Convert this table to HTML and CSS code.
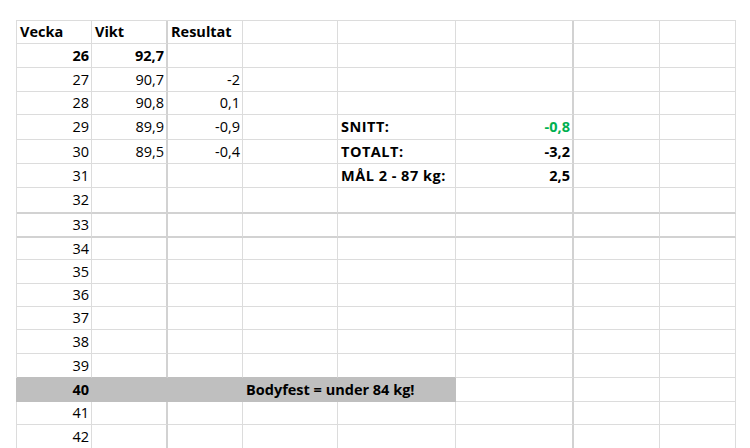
FILE: index.html
```html
<!DOCTYPE html>
<html lang="sv">
<head>
<meta charset="utf-8">
<title>Vikt</title>
<link rel="stylesheet" href="styles.css">
</head>
<body>
<div class="sheet">
  <!-- header -->
  <div class="c b">Vecka</div><div class="c b cb">Vikt</div><div class="c b">Resultat</div><div class="c"></div><div class="c"></div><div class="c cf"></div><div class="c"></div><div class="c"></div>
  <!-- 26 -->
  <div class="c n b">26</div><div class="c n b cb">92,7</div><div class="c"></div><div class="c"></div><div class="c"></div><div class="c cf"></div><div class="c"></div><div class="c"></div>
  <!-- 27 -->
  <div class="c n">27</div><div class="c n cb">90,7</div><div class="c n">-2</div><div class="c"></div><div class="c"></div><div class="c cf"></div><div class="c"></div><div class="c"></div>
  <!-- 28 -->
  <div class="c n">28</div><div class="c n cb">90,8</div><div class="c n">0,1</div><div class="c"></div><div class="c"></div><div class="c cf"></div><div class="c"></div><div class="c"></div>
  <!-- 29 -->
  <div class="c n">29</div><div class="c n cb">89,9</div><div class="c n">-0,9</div><div class="c"></div><div class="c b lbl">SNITT:</div><div class="c n b cf green">-0,8</div><div class="c"></div><div class="c"></div>
  <!-- 30 -->
  <div class="c n">30</div><div class="c n cb">89,5</div><div class="c n">-0,4</div><div class="c"></div><div class="c b lbl">TOTALT:</div><div class="c n b cf">-3,2</div><div class="c"></div><div class="c"></div>
  <!-- 31 -->
  <div class="c n">31</div><div class="c cb"></div><div class="c"></div><div class="c"></div><div class="c b lbl">MÅL 2 - 87 kg:</div><div class="c n b cf">2,5</div><div class="c"></div><div class="c"></div>
  <!-- 32 -->
  <div class="c n rt">32</div><div class="c cb rt"></div><div class="c rt"></div><div class="c rt"></div><div class="c rt"></div><div class="c cf rt"></div><div class="c rt"></div><div class="c rt"></div>
  <!-- 33 -->
  <div class="c n rt">33</div><div class="c cb rt"></div><div class="c rt"></div><div class="c rt"></div><div class="c rt"></div><div class="c cf rt"></div><div class="c rt"></div><div class="c rt"></div>
  <!-- 34 -->
  <div class="c n">34</div><div class="c cb"></div><div class="c"></div><div class="c"></div><div class="c"></div><div class="c cf"></div><div class="c"></div><div class="c"></div>
  <!-- 35 -->
  <div class="c n">35</div><div class="c cb"></div><div class="c"></div><div class="c"></div><div class="c"></div><div class="c cf"></div><div class="c"></div><div class="c"></div>
  <!-- 36 -->
  <div class="c n">36</div><div class="c cb"></div><div class="c"></div><div class="c"></div><div class="c"></div><div class="c cf"></div><div class="c"></div><div class="c"></div>
  <!-- 37 -->
  <div class="c n">37</div><div class="c cb"></div><div class="c"></div><div class="c"></div><div class="c"></div><div class="c cf"></div><div class="c"></div><div class="c"></div>
  <!-- 38 -->
  <div class="c n">38</div><div class="c cb"></div><div class="c"></div><div class="c"></div><div class="c"></div><div class="c cf"></div><div class="c"></div><div class="c"></div>
  <!-- 39 -->
  <div class="c n above">39</div><div class="c cb above"></div><div class="c above"></div><div class="c above"></div><div class="c above"></div><div class="c cf"></div><div class="c"></div><div class="c"></div>
  <!-- 40 -->
  <div class="c n b bar bar-first">40</div><div class="c bar"></div><div class="c bar"></div><div class="c b bar bar-note">Bodyfest = under 84 kg!</div><div class="c cf"></div><div class="c"></div><div class="c"></div>
  <!-- 41 -->
  <div class="c n">41</div><div class="c cb"></div><div class="c"></div><div class="c"></div><div class="c"></div><div class="c cf"></div><div class="c"></div><div class="c"></div>
  <!-- 42 -->
  <div class="c n">42</div><div class="c cb"></div><div class="c"></div><div class="c"></div><div class="c"></div><div class="c cf"></div><div class="c"></div><div class="c"></div>
</div>
</body>
</html>
```

FILE: styles.css
```css
html, body {
  margin: 0;
  padding: 0;
  background: #ffffff;
}

body {
  padding: 20px 0 0 16px;
  font-family: "Open Sans", Lato, "Liberation Sans", sans-serif;
  font-size: 14.5px;
  color: #000000;
  overflow: hidden;
  height: 448px;
  box-sizing: border-box;
}

.sheet {
  display: grid;
  grid-template-columns: 75px 76px 75px 95px 118px 118px 86px 76px;
  grid-template-rows: 23px 24px 24px 23px 25px 24px 24px 26px 24px 22px 24px 23px 23px 24px 24px 24px 23px 24px;
  width: max-content;
  border-top: 1px solid #dcdcdc;
  border-left: 1px solid #dcdcdc;
}

.c {
  box-sizing: border-box;
  border-right: 1px solid #dcdcdc;
  border-bottom: 1px solid #dcdcdc;
  padding: 1px 2px 0 3px;
  display: flex;
  align-items: center;
  white-space: nowrap;
  line-height: 1;
}

.n {
  justify-content: flex-end;
}

.b {
  font-weight: 700;
}

.lbl {
  letter-spacing: 0.5px;
}

.green {
  color: #00b050;
}

.cb,
.cf {
  border-right: 2px solid #d2d2d2;
}

.rt {
  border-bottom: 2px solid #d2d2d2;
}

.above {
  border-bottom-color: #bfbfbf;
}

.bar {
  background: #bfbfbf;
  border-color: #bfbfbf;
}

.bar-first {
  margin-left: -1px;
}

.bar-note {
  grid-column: span 2;
}
```
